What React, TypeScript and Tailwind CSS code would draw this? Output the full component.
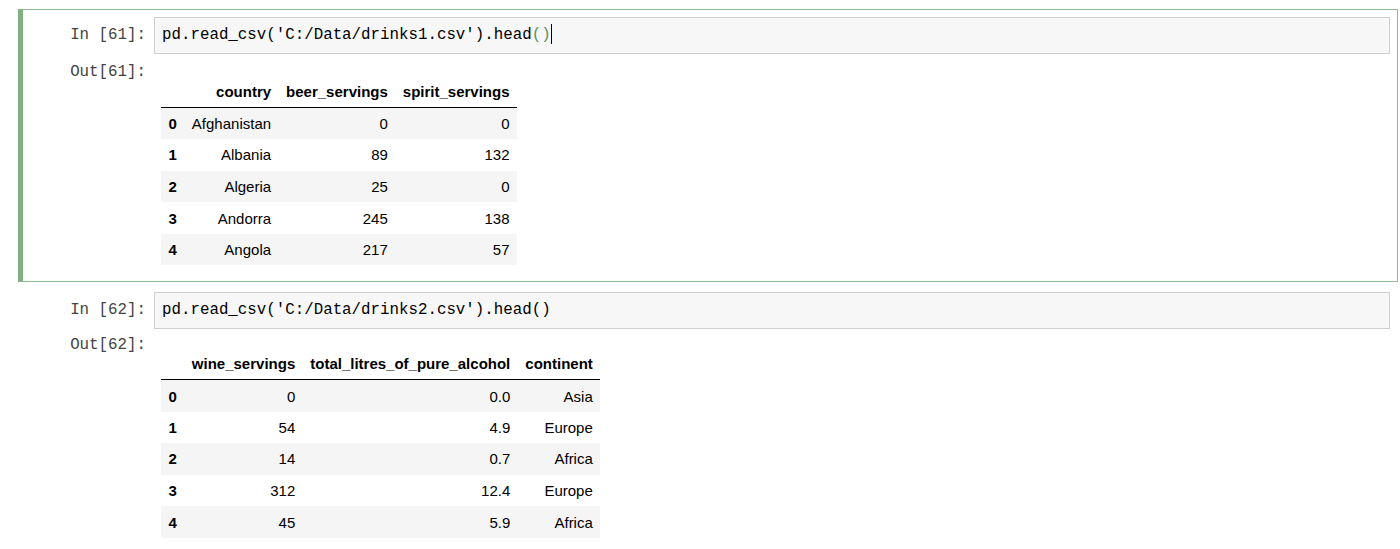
import React from "react";

const mono = { fontFamily: '"Liberation Mono", "DejaVu Sans Mono", monospace' };
const sans = { fontFamily: '"Liberation Sans", Arial, sans-serif' };

type Row = (string | number)[];

function DataTable({ headers, rows }: { headers: string[]; rows: Row[] }) {
  return (
    <table className="border-collapse text-[15px] text-black" style={sans}>
      <thead>
        <tr className="border-b border-black">
          <th className="px-[7.5px] py-[7.5px] leading-[17px]"></th>
          {headers.map((h) => (
            <th key={h} className="px-[7.5px] py-[7.5px] leading-[17px] text-right font-bold">
              {h}
            </th>
          ))}
        </tr>
      </thead>
      <tbody>
        {rows.map((r, i) => (
          <tr key={i} className={i % 2 === 0 ? "bg-[#f5f5f5]" : "bg-white"}>
            <th className="h-[31.6px] px-[7.5px] py-0 leading-[17px] text-left font-bold">{i}</th>
            {r.map((c, j) => (
              <td key={j} className="h-[31.6px] px-[7.5px] py-0 leading-[17px] text-right">
                {c}
              </td>
            ))}
          </tr>
        ))}
      </tbody>
    </table>
  );
}

function Cell({
  n,
  code,
  selected,
  headers,
  rows,
}: {
  n: number;
  code: React.ReactNode;
  selected: boolean;
  headers: string[];
  rows: Row[];
}) {
  return (
    <div
      className={
        "ml-[18px] w-[1380px] border border-l-[5px] pr-[7px] " +
        (selected
          ? "border-[#8fbd8f] border-l-[#80b080] pt-[7px] pb-[16px]"
          : "border-transparent pt-[9px] pb-[4px]")
      }
    >
      <div className="flex">
        <div className="w-[131px] shrink-0 pr-[8px] text-right text-[15.8px] leading-[37px] text-[#444]" style={mono}>
          In&nbsp;[{n}]:
        </div>
        <div className="flex-1 h-[37px] border border-[#cfcfcf] bg-[#f7f7f7] pl-[7px] flex items-center text-[15.8px] text-black" style={mono}>
          {code}
        </div>
      </div>
      <div className="flex">
        <div
          className={
            "w-[131px] shrink-0 pr-[8px] text-right text-[15.8px] leading-[20px] text-[#444] " +
            (selected ? "pt-[8px]" : "pt-[6px]")
          }
          style={mono}
        >
          Out[{n}]:
        </div>
        <div className={"pl-[7px] " + (selected ? "pt-[21px]" : "pt-[18px]")}>
          <DataTable headers={headers} rows={rows} />
        </div>
      </div>
    </div>
  );
}

export default function App() {
  return (
    <div className="w-[1400px] h-[549px] overflow-hidden bg-white pt-[9px]">
      <Cell
        n={61}
        selected
        code={
          <span className="whitespace-pre">
            pd.read_csv('C:/Data/drinks1.csv').head<span className="text-[#5a8f5a]">()</span>
            <span className="inline-block w-[1px] h-[20px] bg-black align-middle"></span>
          </span>
        }
        headers={["country", "beer_servings", "spirit_servings"]}
        rows={[
          ["Afghanistan", 0, 0],
          ["Albania", 89, 132],
          ["Algeria", 25, 0],
          ["Andorra", 245, 138],
          ["Angola", 217, 57],
        ]}
      />
      <Cell
        n={62}
        selected={false}
        code={<span className="whitespace-pre">pd.read_csv('C:/Data/drinks2.csv').head()</span>}
        headers={["wine_servings", "total_litres_of_pure_alcohol", "continent"]}
        rows={[
          [0, "0.0", "Asia"],
          [54, "4.9", "Europe"],
          [14, "0.7", "Africa"],
          [312, "12.4", "Europe"],
          [45, "5.9", "Africa"],
        ]}
      />
    </div>
  );
}
